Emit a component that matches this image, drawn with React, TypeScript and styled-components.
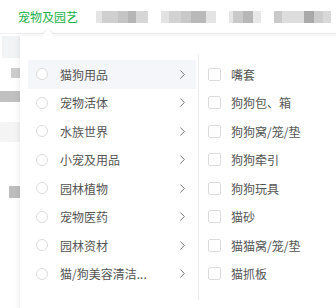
import styled, { createGlobalStyle } from "styled-components";
import { ChevronRight } from "lucide-react";

const GlobalStyle = createGlobalStyle`
  html, body {
    margin: 0;
    padding: 0;
    background: #fff;
    font-family: "Microsoft YaHei", "Noto Sans CJK SC", "Liberation Sans", sans-serif;
    overflow: hidden;
  }
`;

const Page = styled.div`
  position: relative;
  width: 336px;
  height: 308px;
  overflow: hidden;
`;

const TopNav = styled.nav`
  height: 34px;
  display: flex;
  align-items: center;
  gap: 13px;
  padding-left: 18px;
  border-bottom: 1px solid #f0f0f0;
  box-sizing: border-box;
`;

const ActiveTab = styled.span`
  font-size: 12px;
  color: #22b14c;
  margin-right: 5px;
`;

const BlurTab = styled.span`
  display: flex;
  height: 12px;
`;

const Pixel = styled.i<{ $w: number; $c: string }>`
  display: block;
  width: ${(p) => p.$w}px;
  height: 100%;
  background: ${(p) => p.$c};
`;

const Backdrop = styled.div`
  display: flex;
  flex-direction: column;
  width: 20px;
  padding-top: 2px;
`;

const BackBlock = styled.div<{ $h: number; $w: number; $c: string; $mt: number }>`
  height: ${(p) => p.$h}px;
  width: ${(p) => p.$w}px;
  margin-top: ${(p) => p.$mt}px;
  margin-left: ${(p) => 20 - p.$w}px;
  background: ${(p) => p.$c};
`;

const Popover = styled.div`
  position: absolute;
  left: 20px;
  top: 36px;
  width: 340px;
  height: 290px;
  background: #fff;
  box-shadow: 0 0 6px rgba(0, 0, 0, 0.1);
  display: flex;
  padding: 24px 0 0 8px;
  box-sizing: border-box;

  &::before {
    content: "";
    position: absolute;
    left: 24px;
    top: -5px;
    width: 8px;
    height: 8px;
    background: #fff;
    transform: rotate(45deg);
    box-shadow: -1px -1px 2px rgba(0, 0, 0, 0.06);
  }
`;

const CategoryList = styled.ul`
  list-style: none;
  margin: 0;
  padding: 0;
  width: 168px;
`;

const CategoryRow = styled.li<{ $active?: boolean }>`
  height: 28.5px;
  display: flex;
  align-items: center;
  padding: 0 6px 0 8px;
  background: ${(p) => (p.$active ? "#f5f6f9" : "transparent")};
  font-size: 12px;
  color: #555;
`;

const Radio = styled.span`
  width: 12px;
  height: 12px;
  border: 1px solid #dcdcdc;
  border-radius: 50%;
  box-sizing: border-box;
  background: #fff;
  margin-right: 12px;
  flex-shrink: 0;
`;

const Label = styled.span`
  flex: 1;
  white-space: nowrap;
`;

const Chevron = styled(ChevronRight)`
  color: #777;
`;

const Divider = styled.div`
  width: 1px;
  height: 246px;
  margin: -6px 0 0 2px;
  background: #ececec;
`;

const SubList = styled.ul`
  list-style: none;
  margin: 0;
  padding: 0 0 0 9px;
`;

const SubRow = styled.li`
  height: 28.5px;
  display: flex;
  align-items: center;
  font-size: 12px;
  color: #555;
`;

const Checkbox = styled.span`
  width: 13px;
  height: 13px;
  border: 1px solid #dcdcdc;
  border-radius: 2px;
  box-sizing: border-box;
  margin-right: 10px;
`;

const tabs: [number, string][][] = [
  [
    [6, "#e4e4e4"],
    [16, "#cfcfcf"],
    [10, "#c4c4c4"],
    [8, "#b5b5b5"],
    [12, "#d6d6d6"],
  ],
  [
    [8, "#e2e2e2"],
    [12, "#d2d2d2"],
    [10, "#c8c8c8"],
    [15, "#b9b9b9"],
    [10, "#e4e4e4"],
  ],
  [
    [4, "#e6e6e6"],
    [10, "#c9c9c9"],
    [10, "#b7b7b7"],
    [8, "#e8e8e8"],
  ],
  [
    [8, "#c9c9c9"],
    [22, "#dddddd"],
    [10, "#a9a9a9"],
    [9, "#cccccc"],
    [8, "#d8d8d8"],
  ],
];

const categories = [
  "猫狗用品",
  "宠物活体",
  "水族世界",
  "小宠及用品",
  "园林植物",
  "宠物医药",
  "园林资材",
  "猫/狗美容清洁...",
];

const subs = [
  "嘴套",
  "狗狗包、箱",
  "狗狗窝/笼/垫",
  "狗狗牵引",
  "狗狗玩具",
  "猫砂",
  "猫猫窝/笼/垫",
  "猫抓板",
];

export default function App() {
  return (
    <>
      <GlobalStyle />
      <Page>
        <TopNav>
          <ActiveTab>宠物及园艺</ActiveTab>
          {tabs.map((t, i) => (
            <BlurTab key={i}>
              {t.map(([w, c], j) => (
                <Pixel key={j} $w={w} $c={c} />
              ))}
            </BlurTab>
          ))}
        </TopNav>
        <Backdrop>
          <BackBlock $h={22} $w={18} $c="#f2f3f5" $mt={0} />
          <BackBlock $h={10} $w={9} $c="#cdcdcd" $mt={10} />
          <BackBlock $h={11} $w={20} $c="#c0c0c0" $mt={13} />
          <BackBlock $h={20} $w={20} $c="#f4f4f4" $mt={20} />
          <BackBlock $h={12} $w={11} $c="#bdbdbd" $mt={44} />
        </Backdrop>
        <Popover>
          <CategoryList>
            {categories.map((c, i) => (
              <CategoryRow key={c} $active={i === 0}>
                <Radio />
                <Label>{c}</Label>
                <Chevron size={15} strokeWidth={1.6} />
              </CategoryRow>
            ))}
          </CategoryList>
          <Divider />
          <SubList>
            {subs.map((s) => (
              <SubRow key={s}>
                <Checkbox />
                {s}
              </SubRow>
            ))}
          </SubList>
        </Popover>
      </Page>
    </>
  );
}
